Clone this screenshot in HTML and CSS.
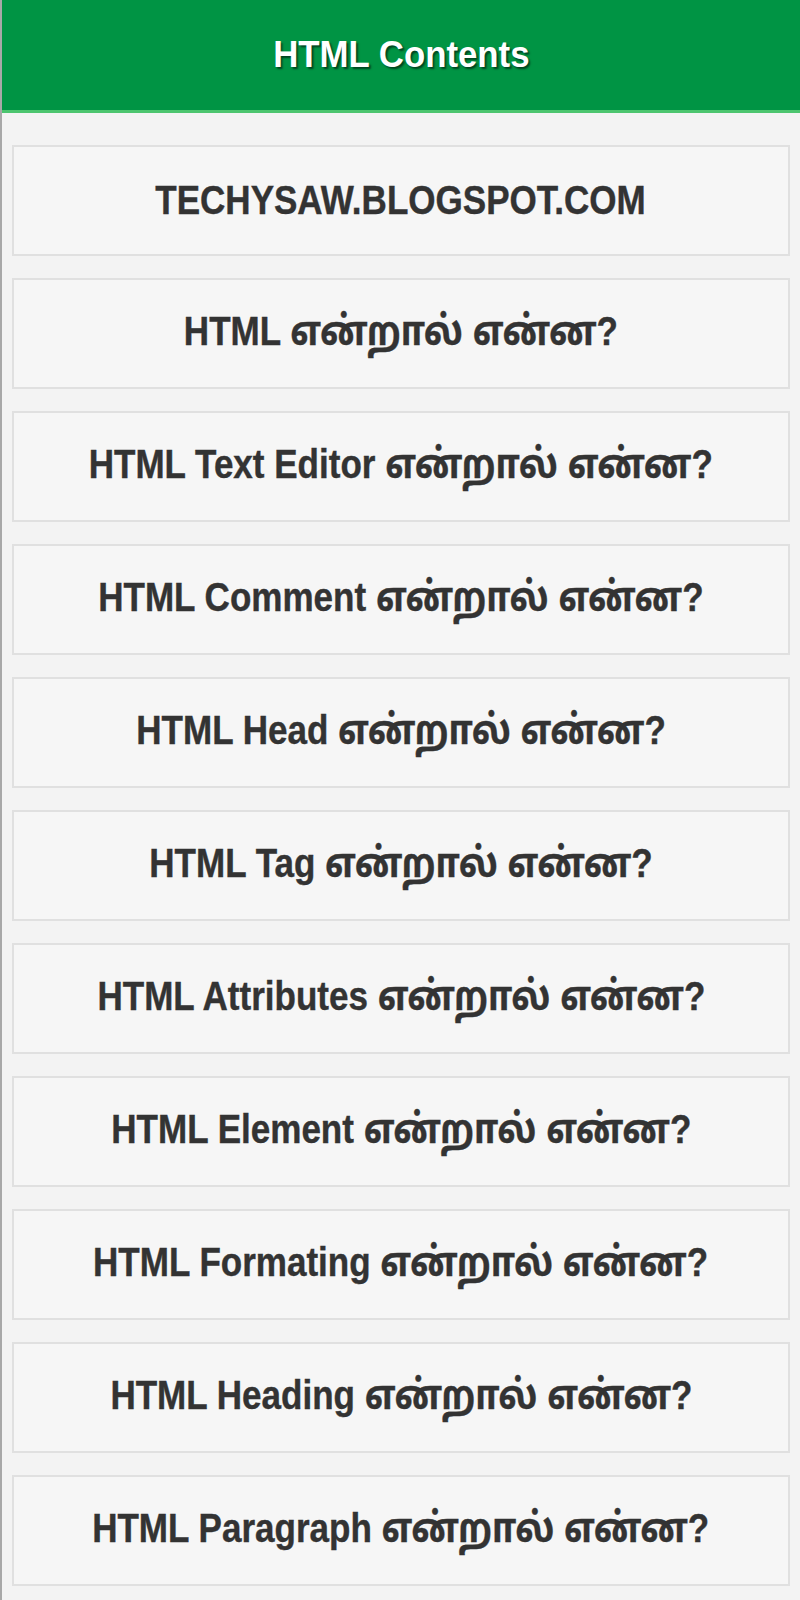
FILE: index.html
```html
<!DOCTYPE html>
<html lang="ta">
<head>
<meta charset="utf-8">
<title>HTML Contents</title>
<link rel="stylesheet" href="styles.css">
</head>
<body>
<div class="app">
  <header class="topbar"><h1 class="title"><span class="squeeze">HTML Contents</span></h1></header>
  <main class="list">
    <a class="item"><span class="label">TECHYSAW.BLOGSPOT.COM</span></a>
    <a class="item"><span class="label">HTML என்றால் என்ன?</span></a>
    <a class="item"><span class="label">HTML Text Editor என்றால் என்ன?</span></a>
    <a class="item"><span class="label">HTML Comment என்றால் என்ன?</span></a>
    <a class="item"><span class="label">HTML Head என்றால் என்ன?</span></a>
    <a class="item"><span class="label">HTML Tag என்றால் என்ன?</span></a>
    <a class="item"><span class="label">HTML Attributes என்றால் என்ன?</span></a>
    <a class="item"><span class="label">HTML Element என்றால் என்ன?</span></a>
    <a class="item"><span class="label">HTML Formating என்றால் என்ன?</span></a>
    <a class="item"><span class="label">HTML Heading என்றால் என்ன?</span></a>
    <a class="item"><span class="label">HTML Paragraph என்றால் என்ன?</span></a>
  </main>
</div>
</body>
</html>
```
FILE: styles.css
```css
html, body {
  margin: 0;
  padding: 0;
  background: #f3f3f3;
}
.app {
  width: 800px;
  min-height: 1600px;
  box-sizing: border-box;
  border-left: 2px solid #a8a8a8;
  background: #f3f3f3;
}
.topbar {
  height: 110px;
  background: #009444;
  border-bottom: 3px solid #4cc56f;
  display: flex;
  align-items: center;
  justify-content: center;
}
.title {
  margin: 0;
  color: #fff;
  font-family: "Liberation Sans", Arial, sans-serif;
  font-weight: bold;
  font-size: 37px;
  text-shadow: 2px 2px 2px rgba(0,0,0,0.55);
}
.squeeze {
  display: inline-block;
  transform: scaleX(0.94);
}
.list {
  display: flex;
  flex-direction: column;
  gap: 22px;
  padding: 32px 10px 0 10px;
}
.item {
  display: flex;
  align-items: center;
  justify-content: center;
  height: 111px;
  box-sizing: border-box;
  background: #f6f6f6;
  border: 2px solid #e0e0e0;
  color: #333;
  font-family: "Liberation Sans", Arial, "Noto Sans Tamil", "Lohit Tamil", sans-serif;
  font-weight: bold;
  font-size: 40.5px;
  text-decoration: none;
  white-space: nowrap;
}
.label {
  display: inline-block;
  transform: scaleX(0.865);
  -webkit-text-stroke: 0.4px #333;
}
```
